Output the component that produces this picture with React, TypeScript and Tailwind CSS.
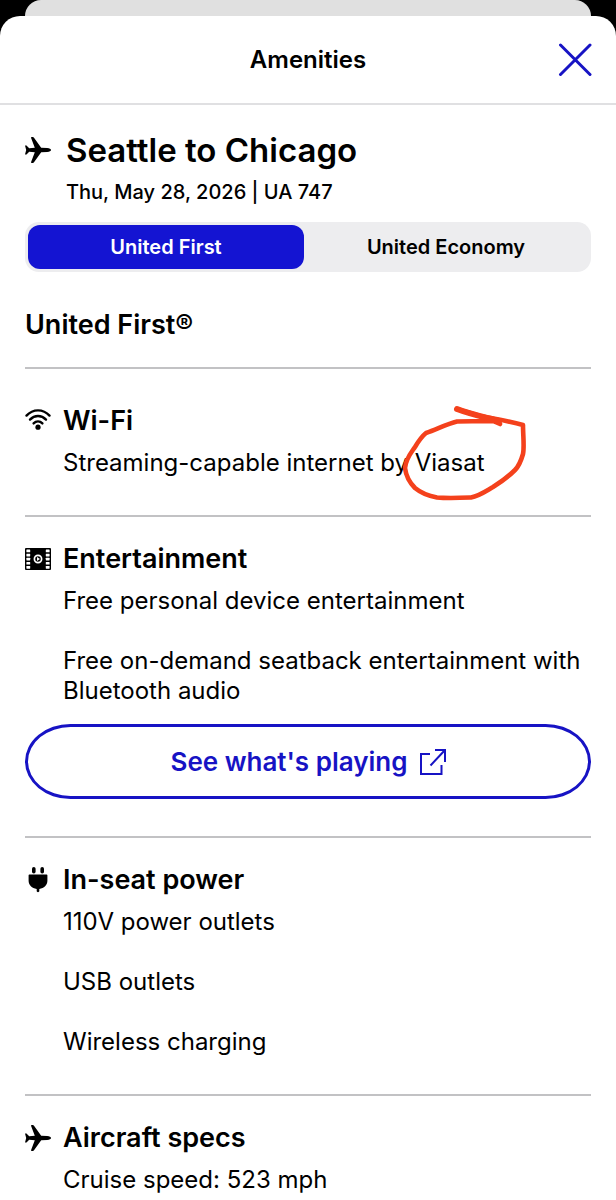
import { useState } from 'react';
import type { ReactNode } from 'react';

const cabins = ['United First', 'United Economy'];

function PlaneIcon() {
  return (
    <svg width="26" height="26" viewBox="0 0 26 26" fill="currentColor" aria-hidden="true">
      <path d="M0 8.4h1.500L4.200 11.200L9.800 10.800L6.200 1.200C5.900.4 6.200 0 6.900 0H7.800c.5 0 .9.2 1.200.7L16.200 10.700l6 .4c2.400.2 3.800.9 3.800 1.900s-1.400 1.700-3.800 1.900l-6 .4L9 25.300c-.3.5-.7.7-1.200.7H6.900c-.7 0-1-.4-.7-1.200L9.800 15.200L4.200 14.800L1.500 17.600H0L1.200 13z" />
    </svg>
  );
}

function WifiIcon() {
  return (
    <svg width="26" height="24" viewBox="0 0 26 24" fill="none" stroke="currentColor" strokeWidth="2.4" strokeLinecap="round" aria-hidden="true">
      <path d="M1.500 6.600C8-.4 18-.4 24.500 6.600" />
      <path d="M5 10.600c4.600-4.800 11.400-4.800 16 0" />
      <path d="M8.600 14.400c2.600-2.700 6.200-2.700 8.800 0" />
      <circle cx="13" cy="18.200" r="2.600" fill="currentColor" stroke="none" />
    </svg>
  );
}

function FilmIcon() {
  return (
    <svg width="26" height="22" viewBox="0 0 26 22" aria-hidden="true">
      <rect width="26" height="22" rx="1" fill="#000" />
      <g fill="#fff">
        {[1.6, 5.7, 9.8, 13.9, 18].map((y) => (
          <g key={y}>
            <rect x="1.4" y={y} width="3.8" height="2.7" rx=".4" />
            <rect x="20.8" y={y} width="3.8" height="2.7" rx=".4" />
          </g>
        ))}
      </g>
      <circle cx="13" cy="11" r="3.6" fill="#000" stroke="#fff" strokeWidth="1.7" />
      <path d="M12 9l3 2-3 2z" fill="#fff" />
    </svg>
  );
}

function PlugIcon() {
  return (
    <svg width="26" height="26" viewBox="0 0 26 26" fill="currentColor" aria-hidden="true">
      <rect x="7" y="0" width="3.6" height="6.6" rx="1.8" />
      <rect x="15.4" y="0" width="3.6" height="6.6" rx="1.8" />
      <path d="M4.400 7.400h17.200c.5 0 .8.3.8.8v5.600c0 4.200-3.400 7.500-8.100 8.200v2c0 .7-.6 1.200-1.300 1.200s-1.300-.5-1.300-1.200v-2c-4.700-.7-8.100-4-8.100-8.200V8.200c0-.5.3-.8.8-.8z" />
    </svg>
  );
}

function ExternalIcon() {
  return (
    <svg width="26" height="26" viewBox="0 0 26 26" fill="none" stroke="currentColor" strokeWidth="2" aria-hidden="true">
      <path d="M10 5H1V25H21.500V16" />
      <path d="M15 1H25v12M25 1L10.500 16.500" />
    </svg>
  );
}

function HandDrawnCircle() {
  return (
    <svg
      className="pointer-events-none absolute -top-[47px] -left-[15px]"
      width="130"
      height="105"
      viewBox="400 400 130 105"
      fill="none"
      stroke="#f4411c"
      strokeWidth="4.6"
      strokeLinecap="round"
      strokeLinejoin="round"
      aria-hidden="true"
    >
      <path d="M457 408C466 411 473 413 482 415.500C495 418 509 420 523 424C523 434 524.500 446 523 453C521 460 519 465 515 469C508 476 501 481 493 486C486 490 479 495 471 496.500C459 497 448 497.500 437 496.500C429 495 421 492 415 487C409 481 406 475 405 467C406 457 411 452 415 446C418 441 421 436 426 432C436 429 446 423 457 420.500C469 420 481 420 493 420L500 423" />
      <path d="M457 408C470 413 484 416 499 420" strokeWidth="6" />
    </svg>
  );
}

function Section({ icon, title, children }: { icon: ReactNode; title: string; children: ReactNode }) {
  return (
    <section className="border-b-2 border-[#c2c2c4] pt-[26px] pb-[37px] last:border-b-0 last:pb-0">
      <div className="flex items-center gap-3">
        <span className="flex w-[26px] shrink-0 justify-center">{icon}</span>
        <h3 className="text-[27px] leading-8 font-semibold">{title}</h3>
      </div>
      {children}
    </section>
  );
}

function Details({ children }: { children: ReactNode }) {
  return <div className="mt-[11px] flex flex-col gap-[30px] pl-[38px] text-2xl leading-[30px]">{children}</div>;
}

export default function App() {
  const [cabin, setCabin] = useState(cabins[0]);

  return (
    <div className="min-h-screen bg-black font-['Inter','Liberation_Sans',sans-serif] text-black">
      <div className="mx-[25px] h-4 rounded-t-2xl bg-[#e0e0e0]" />
      <div className="min-h-[calc(100vh-16px)] rounded-t-[20px] bg-white">
        <header className="grid grid-cols-[1fr_auto_1fr] items-center border-b-2 border-[#e0e0e2] px-6 pt-1 pb-[3px]">
          <h1 className="col-start-2 text-2xl leading-10 font-semibold">Amenities</h1>
          <button type="button" aria-label="Close" className="flex h-20 items-center justify-self-end text-[#1713c4]">
            <svg width="34" height="34" viewBox="0 0 34 34" fill="none" stroke="currentColor" strokeWidth="3" strokeLinecap="round">
              <path d="M2.500 2l29.500 29.500M32 2L2.500 31.500" />
            </svg>
          </button>
        </header>

        <main className="px-[25px] pt-[25px]">
          <div className="flex items-center gap-[15px]">
            <PlaneIcon />
            <h2 className="text-[33px] leading-10 font-semibold">Seattle to Chicago</h2>
          </div>
          <p className="mt-2 pl-[41px] text-xl leading-7 font-medium">Thu, May 28, 2026 | UA 747</p>

          <div role="tablist" aria-label="Cabin" className="mt-4 grid grid-cols-[69fr_71fr] rounded-[14px] bg-[#ededef] p-[3px]">
            {cabins.map((name) => (
              <button
                key={name}
                type="button"
                role="tab"
                aria-selected={cabin === name}
                onClick={() => setCabin(name)}
                className={`h-11 rounded-xl text-xl font-semibold ${cabin === name ? 'bg-[#1414d2] text-white' : 'text-black'}`}
              >
                {name}
              </button>
            ))}
          </div>

          <h2 className="mt-[37px] border-b-2 border-[#c2c2c4] pb-[26px] text-[27px] leading-8 font-semibold">United First®</h2>

          <div className="pt-[10px]">
            <Section icon={<WifiIcon />} title="Wi-Fi">
              <Details>
                <p>
                  Streaming-capable internet by{' '}
                  <span className="relative inline-block">
                    Viasat
                    <HandDrawnCircle />
                  </span>
                </p>
              </Details>
            </Section>

            <Section icon={<FilmIcon />} title="Entertainment">
              <Details>
                <p>Free personal device entertainment</p>
                <p>Free on-demand seatback entertainment with Bluetooth audio</p>
              </Details>
              <a
                href="#"
                className="mt-[18px] flex h-[75px] items-center justify-center gap-3 rounded-[46px/38px] border-3 border-[#1713c4] text-[26px] font-semibold text-[#1713c4]"
              >
                See what's playing
                <ExternalIcon />
              </a>
            </Section>

            <Section icon={<PlugIcon />} title="In-seat power">
              <Details>
                <p>110V power outlets</p>
                <p>USB outlets</p>
                <p>Wireless charging</p>
              </Details>
            </Section>

            <Section icon={<PlaneIcon />} title="Aircraft specs">
              <Details>
                <p>Cruise speed: 523 mph</p>
              </Details>
            </Section>
          </div>
        </main>
      </div>
    </div>
  );
}
